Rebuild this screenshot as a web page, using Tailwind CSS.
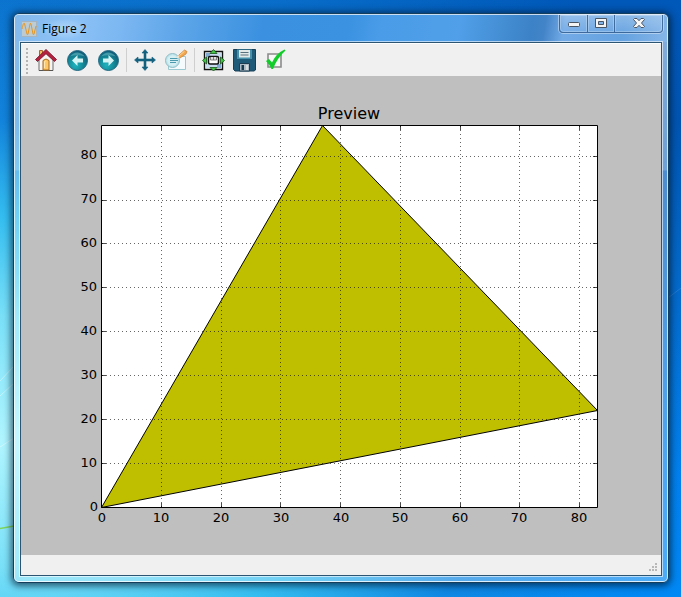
<!DOCTYPE html>
<html lang="en">
<head>
<meta charset="utf-8">
<meta name="viewport" content="width=device-width, initial-scale=1">
<title>Figure 2</title>
<script src="https://cdn.jsdelivr.net/npm/@tailwindcss/browser@4"></script>
</head>
<body class="relative flex h-screen overflow-hidden bg-[radial-gradient(ellipse_700px_450px_at_0%_74%,#b0f5ff_0%,#79e0f8_28%,#34bdf0_50%,#1488e0bb_72%,#0f78d000_100%),linear-gradient(to_right,#1080d8aa_0%,#1080d888_40%,#1080d800_85%),linear-gradient(to_bottom,#0058b8_0%,#0055b2_20%,#0468c8_45%,#0080f0_80%,#0088f4_100%)] pt-[13px] pr-3 pb-3.5 pl-[13px] font-['Open_Sans','Noto_Sans',sans-serif]">

<!-- Wallpaper streaks -->
<svg class="absolute inset-0 h-full w-full" viewBox="0 0 681 597" preserveAspectRatio="none" fill="none" aria-hidden="true">
  <path d="M0 381 14 366M0 396 14 383M0 447 14 438" stroke="#fff" stroke-opacity=".4"/>
  <path d="M0 528.500 14 526" stroke="#7fd65c" stroke-width="1.500"/>
  <path d="M668 298 681 288" stroke="#fff" stroke-opacity=".12"/>
</svg>

<main class="relative flex min-w-0 flex-1 flex-col rounded-md border border-[#153d5c] bg-white/30 shadow-[0_1px_7px_2px_rgba(0,20,40,0.65)]">
  <div class="flex min-h-0 flex-1 flex-col rounded-[5px] border border-white/70 bg-[linear-gradient(to_bottom,#ffffff50_0,#ffffff30_155px,#ffffff00_156px)] px-[5px] pb-[5px]">
    <header class="-mx-[5px] flex h-[27px] shrink-0 items-start justify-between rounded-t bg-[linear-gradient(100deg,#84b9ec_0%,#8cc2f6_9%,#7db8f2_16%,#5ba4e8_26%,#3b91e0_38%,#3a92e0_51%,#4a9ce8_56%,#509fe8_68%,#3c82c6_79%,#4384c8_81%,#72aae6_84%,#65a2e0_93%,#86b6e8_100%)] pl-1.5">
      <div class="flex h-[27px] items-center gap-[5px]">
        <svg class="h-4 w-4" viewBox="0 0 16 16" fill="none" aria-hidden="true">
          <rect x=".5" y=".5" width="15" height="15" fill="#c9cfcb" fill-opacity=".8" stroke="#a5b4bf"/>
          <path d="M1 8C2 3 2.800 1.500 3.500 2.500L6 13Q6.500 14.500 7 13L9 3Q9.500 1.500 10 3L12 13Q12.500 14.500 13 13L15 5" stroke="#e8961e" stroke-width="1"/>
        </svg>
        <h1 class="bg-[radial-gradient(ellipse_at_center,#ffffff55_0%,#ffffff00_75%)] text-[12px] leading-5 text-black">Figure 2</h1>
      </div>
      <div class="mr-1 flex h-[18px] rounded-b border border-t-0 border-[#315a8c]/80 shadow-[0_0_0_1px_rgba(255,255,255,0.4)]">
        <button type="button" aria-label="Minimize" class="flex w-7 items-center justify-center rounded-bl border-r border-[#315a8c]/80 bg-linear-to-b from-white/25 to-white/5 inset-ring inset-ring-white/25">
          <svg class="h-[13px] w-[14px]" viewBox="0 0 14 13"><rect x="1.500" y="5.500" width="11" height="4" rx="1" fill="#f4f4f4" stroke="#4a5564"/></svg>
        </button>
        <button type="button" aria-label="Maximize" class="flex w-[27px] items-center justify-center border-r border-[#315a8c]/80 bg-linear-to-b from-white/25 to-white/5 inset-ring inset-ring-white/25">
          <svg class="h-[13px] w-[14px]" viewBox="0 0 14 13"><path fill-rule="evenodd" d="M1.500 1.500h11v9h-11zM4.500 4.500v3h5v-3z" fill="#f4f4f4" stroke="#4a5564"/></svg>
        </button>
        <button type="button" aria-label="Close" class="flex w-[47px] items-center justify-center rounded-br bg-linear-to-b from-white/25 to-white/5 inset-ring inset-ring-white/25">
          <svg class="h-[13px] w-[14px]" viewBox="0 0 14 13"><path d="M1.500 2.500 2.500 1.500H5L7 3.700 9 1.500h2.500l1 1L9.500 6l3 3.500-1 1H9L7 8.300 5 10.500H2.500l-1-1L4.500 6z" fill="#f4f4f4" stroke="#4a5564"/></svg>
        </button>
      </div>
    </header>

    <section class="flex min-h-0 flex-1 flex-col border border-[#2c5573] bg-[#bfbfbf] shadow-[0_0_0_1px_rgba(255,255,255,0.6)]">
      <div role="toolbar" aria-label="Figure tools" class="flex h-[33px] shrink-0 items-center border-t border-white bg-[#f0f0f0] pl-1">
        <svg class="h-[27px] w-[5px]" viewBox="0 0 5 27" aria-hidden="true"><path d="M2 1v27" stroke="#b4b4b4" stroke-width="2" stroke-dasharray="2 2"/></svg>
        <button type="button" aria-label="Home" class="flex w-[31px] justify-center">
          <svg class="h-6 w-6" viewBox="0 0 24 24">
            <path d="M5.500 2.500h3v6l-3 3z" fill="#f4bb62" stroke="#a8642d"/>
            <path d="M5 11 12 4.500 19 11v11.500H5z" fill="#f6f4f2" stroke="#6f6d6c"/>
            <path d="M5 22.500h14" stroke="#555"/>
            <path d="M9 22v-9.500q3-3 6 0V22z" fill="#ffc765" stroke="#a36a23"/>
            <path d="M10.500 20v-6.500l1.500-.8" fill="none" stroke="#ffe7af"/>
            <path d="M1.500 11.500 12 1.500 22.500 11.500 20.500 13.500 12 5.700 3.500 13.500z" fill="#b6213e" stroke="#7c1830" stroke-width=".9"/>
          </svg>
        </button>
        <button type="button" aria-label="Back" class="flex w-[31px] justify-center">
          <svg class="h-6 w-6" viewBox="0 0 24 24">
            <defs><radialGradient id="orb" cx=".4" cy=".72" r=".75"><stop offset="0" stop-color="#20b4c0"/><stop offset=".55" stop-color="#128493"/><stop offset="1" stop-color="#0d5474"/></radialGradient></defs>
            <circle cx="12.500" cy="12.500" r="10" fill="url(#orb)" stroke="#266983"/>
            <path d="M5 8.500Q12 .5 20 8.500 12 6 5 8.500z" fill="#74c3cb" opacity=".5"/>
            <path d="M7 12.500 12.500 7v3.500H18v4h-5.500V18z" fill="#d4f3f4"/>
          </svg>
        </button>
        <button type="button" aria-label="Forward" class="flex w-[31px] justify-center">
          <svg class="h-6 w-6" viewBox="0 0 24 24">
            <circle cx="12.500" cy="12.500" r="10" fill="url(#orb)" stroke="#266983"/>
            <path d="M5 8.500Q12 .5 20 8.500 12 6 5 8.500z" fill="#74c3cb" opacity=".5"/>
            <path d="M18 12.500 12.500 7v3.500H7v4h5.500V18z" fill="#d4f3f4"/>
          </svg>
        </button>
        <span class="flex h-6 w-1.5 justify-center"><span class="w-px bg-[#cfcfcf]"></span></span>
        <button type="button" aria-label="Pan" class="flex w-[31px] justify-center">
          <svg class="h-6 w-6" viewBox="0 0 24 24">
            <path d="M12 1.500 15 5H13v6h6V9L22.500 12 19 15v-2h-6v6h2L12 22.500 9 19h2v-6H5v2L1.500 12 5 9v2h6V5H9z" fill="#14617f" stroke="#14617f" stroke-width=".6"/>
          </svg>
        </button>
        <button type="button" aria-label="Zoom to rectangle" class="flex w-[31px] justify-center">
          <svg class="h-6 w-6" viewBox="0 0 24 24">
            <path d="M4.500 8.500h17v13h-17z" fill="#f5fbfc" stroke="#9bc9d1"/>
            <path d="M14.500 7.500 20.500 2l2.500 1.500-1 2.500-6 4z" fill="#f3a64a" stroke="#c67f38" stroke-width=".7"/>
            <path d="M15.500 7.500 20.500 3.300" stroke="#ffd697"/>
            <circle cx="8.500" cy="12.500" r="7" fill="#bde5ec" stroke="#90bcc6"/>
            <circle cx="8.500" cy="12.500" r="5.200" fill="#e4f5f6" opacity=".65"/>
            <path d="M6 10.500h8M6 12.500h8M6 14.500h6" stroke="#4c9aae"/>
            <path d="M13 10 15 8" stroke="#f6e4cc" stroke-width="2"/>
          </svg>
        </button>
        <span class="flex h-6 w-1.5 justify-center"><span class="w-px bg-[#cfcfcf]"></span></span>
        <button type="button" aria-label="Configure subplots" class="flex w-[31px] justify-center">
          <svg class="h-6 w-6" viewBox="0 0 24 24">
            <path d="M3.500 3.500h18v18h-18z" fill="#f8fbff" stroke="#111" stroke-width="1.400"/>
            <path d="M5 5h15v15H5z" fill="#c8dbef"/>
            <path d="M5 5h4v4H5zM16 16h4v4h-4z" fill="#84abd2"/>
            <rect x="7.500" y="8.500" width="10" height="7.500" rx="1.500" fill="#fff" stroke="#111" stroke-width="1.500"/>
            <path d="M9.500 9v3h6V9M12.500 9v3" fill="#ddd" stroke="#666" stroke-width=".8"/>
            <path d="M12.500 1.500 16 5.500H9zM12.500 23 16 19.500H9zM1.500 12.500 5.500 9v7zM23.500 12.500 19.500 9v7z" fill="#42c544" stroke="#16551b" stroke-width=".8"/>
          </svg>
        </button>
        <button type="button" aria-label="Save" class="flex w-[31px] justify-center">
          <svg class="h-6 w-6" viewBox="0 0 24 24">
            <path d="M1.500 1.500h22v20.500l-1.500 1H3L1.500 21.500z" fill="#205a79" stroke="#173f58"/>
            <path d="M5 1.500h15v9.500H5z" fill="#4791ad"/>
            <path d="M7 2h11v7.500H7z" fill="#e2e8e7"/>
            <path d="M8.500 4.500h8M8.500 7h8" stroke="#58737f"/>
            <path d="M7.500 15.500h10V23h-10z" fill="#aeb9c3" stroke="#1b3c51"/>
            <path d="M9.500 17h2.500v5H9.500z" fill="#183a4f"/>
            <path d="M14 17h2v5h-2z" fill="#d8dde0"/>
          </svg>
        </button>
        <button type="button" aria-label="Edit curves" class="flex w-[31px] justify-center">
          <svg class="h-6 w-6" viewBox="0 0 24 24">
            <path d="M5 6h13v13H5z" fill="#f7f7f7" stroke="#8b8b8b" stroke-width="1.600"/>
            <path d="M3 13 6 11 9 14.500Q13 5.500 21.500 1.500L22.500 2.500Q14.500 9.500 10 21H8.500Q6 16 3 13z" fill="#11cc29"/>
          </svg>
        </button>
      </div>

      <figure class="min-h-0 flex-1">
        <svg class="h-full w-full" viewBox="0 0 640 479" preserveAspectRatio="xMidYMid meet" role="img" aria-label="Preview plot of a filled triangle" font-family="'DejaVu Sans',sans-serif" font-size="13">
          <path d="M80.500 49.500h496v382h-496z" fill="#fff"/>
          <path d="M80.500 431.500 301.500 49.500 576.500 334.500z" fill="#bfbf00" stroke="#000" stroke-linejoin="round"/>
          <path d="M140.500 431V50M200.500 431V50M259.500 431V50M319.500 431V50M379.500 431V50M439.500 431V50M498.500 431V50M558.500 431V50M81 387.500h495M81 343.500h495M81 299.500h495M81 255.500h495M81 211.500h495M81 167.500h495M81 124.500h495M81 80.500h495" fill="none" stroke="#000" stroke-opacity=".6" stroke-dasharray="1 3"/>
          <path d="M140.500 431v-4m0-377v4M200.500 431v-4m0-377v4M259.500 431v-4m0-377v4M319.500 431v-4m0-377v4M379.500 431v-4m0-377v4M439.500 431v-4m0-377v4M498.500 431v-4m0-377v4M558.500 431v-4m0-377v4M81 387.500h4m491 0h-4M81 343.500h4m491 0h-4M81 299.500h4m491 0h-4M81 255.500h4m491 0h-4M81 211.500h4m491 0h-4M81 167.500h4m491 0h-4M81 124.500h4m491 0h-4M81 80.500h4m491 0h-4" fill="none" stroke="#000" stroke-opacity=".7"/>
          <path d="M80.500 49.500h496v382h-496z" fill="none" stroke="#000"/>
          <text x="328" y="43" font-size="16" text-anchor="middle">Preview</text>
          <g text-anchor="end">
            <text x="77" y="435">0</text><text x="76" y="391">10</text><text x="76" y="347">20</text><text x="76" y="303">30</text><text x="76" y="259">40</text><text x="76" y="215">50</text><text x="76" y="171">60</text><text x="76" y="127">70</text><text x="76" y="83">80</text>
          </g>
          <g text-anchor="middle">
            <text x="81" y="446">0</text><text x="140" y="446">10</text><text x="200" y="446">20</text><text x="260" y="446">30</text><text x="320" y="446">40</text><text x="379" y="446">50</text><text x="439" y="446">60</text><text x="498" y="446">70</text><text x="558" y="446">80</text>
          </g>
        </svg>
      </figure>

      <footer class="flex h-5 shrink-0 items-end justify-end bg-[#f0f0f0] pr-0.5 pb-0.5">
        <svg class="h-3 w-3" viewBox="0 0 12 12" aria-hidden="true"><path d="M8 2h2v2H8zM5 5h2v2H5zM8 5h2v2H8zM2 8h2v2H2zM5 8h2v2H5zM8 8h2v2H8z" fill="#b8b8b8"/></svg>
      </footer>
    </section>
  </div>
</main>
</body>
</html>
